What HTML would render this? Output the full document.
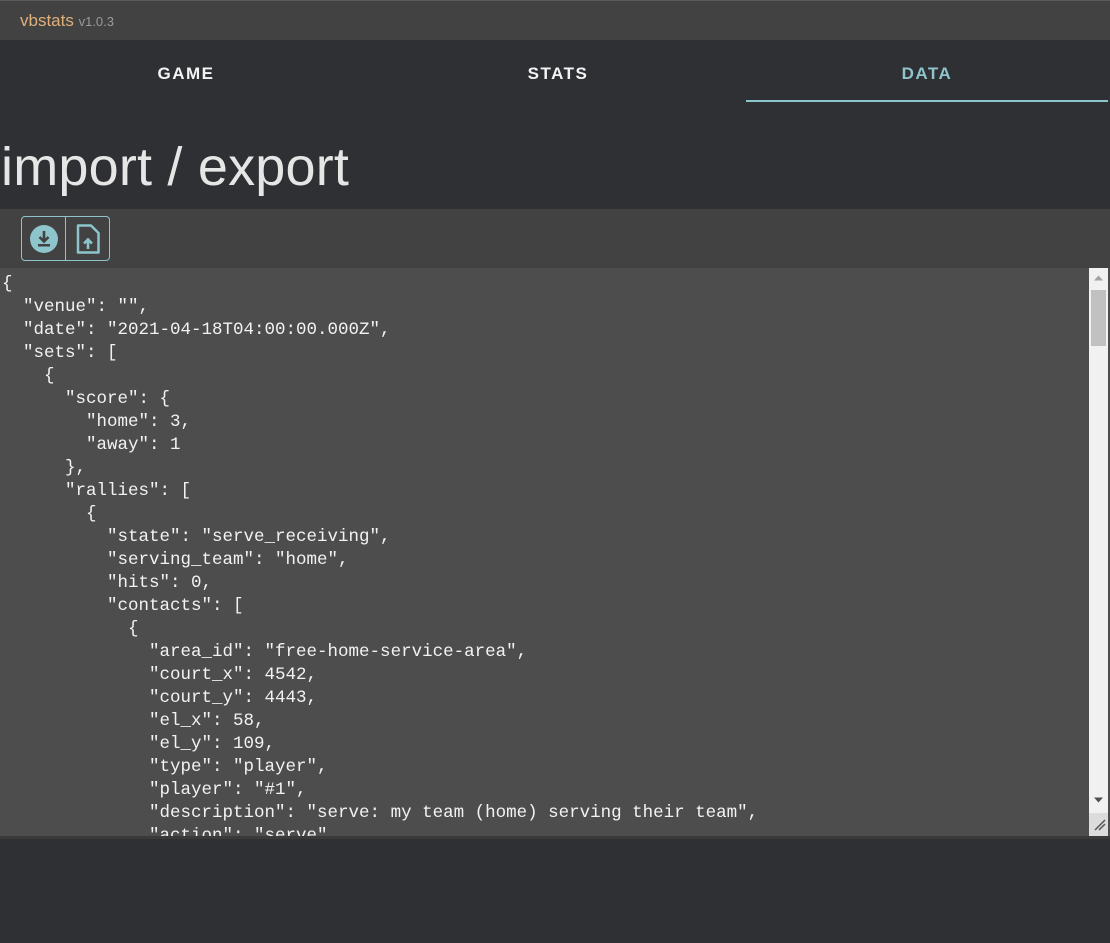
<!DOCTYPE html>
<html><head><meta charset="utf-8"><style>
*{margin:0;padding:0;box-sizing:border-box}
body{width:1110px;height:943px;background:#2f3034;font-family:"Liberation Sans",sans-serif;overflow:hidden;position:relative}
.top{position:absolute;left:0;top:0;width:1110px;height:40px;background:#424242;border-top:1px solid #5a5a5a}
.top .t{position:absolute;left:20px;top:10px;font-size:17px;color:#e0b07a}
.top .v{font-size:13px;color:#9a9a9a}
.tab{position:absolute;top:64px;font-size:17px;font-weight:bold;letter-spacing:1.5px;color:#f4f4f4;text-align:center;width:370px}
.ind{position:absolute;left:746px;top:100px;width:362px;height:2px;background:#8ec4cc}
h1{position:absolute;left:1px;top:136px;font-size:54px;font-weight:300;color:#e6e6e6;letter-spacing:0.2px;white-space:nowrap}
.tool{position:absolute;left:0;top:209px;width:1110px;height:59px;background:#424242}
.btns{position:absolute;left:21px;top:216px;width:89px;height:45px;border:1px solid #8ec4cc;border-radius:4px}
.btns .sep{position:absolute;left:43px;top:0;width:1px;height:43px;background:#8ec4cc}
.ta{position:absolute;left:0;top:268px;width:1110px;height:568px;background:#4d4d4d;overflow:hidden}
pre{position:absolute;left:2px;top:5px;font-family:"Liberation Mono",monospace;font-size:17.5px;line-height:23px;color:#f2f2f2}
.sb{position:absolute;left:1089px;top:0;width:19px;height:568px;background:#f1f1f1}
.thumb{position:absolute;left:2px;top:22px;width:15px;height:56px;background:#c1c1c1}
.bot{position:absolute;left:0;top:836px;width:1110px;height:3px;background:#3a3a3a}
</style></head><body>
<div class="top"><span class="t">vbstats <span class="v">v1.0.3</span></span></div>
<div class="tab" style="left:1px">GAME</div>
<div class="tab" style="left:373px">STATS</div>
<div class="tab" style="left:742px;color:#8ec4cc">DATA</div>
<div class="ind"></div>
<h1>import / export</h1>
<div class="tool"></div>
<div class="btns">
<svg style="position:absolute;left:7px;top:7px" width="30" height="30" viewBox="0 0 30 30"><circle cx="15" cy="15" r="14" fill="#8ec4cc"/><path d="M15 7v10M10.5 13l4.5 4.5 4.5-4.5" stroke="#424242" stroke-width="2.6" fill="none"/><rect x="9" y="20" width="12" height="2.5" fill="#424242"/></svg>
<div class="sep"></div>
<svg style="position:absolute;left:53px;top:7px" width="26" height="30" viewBox="0 0 26 30"><path d="M3 1.5h13l7.5 7.5v19.5H3z" fill="none" stroke="#8ec4cc" stroke-width="2.5" stroke-linejoin="round"/><path d="M13 25v-9M9 19.5l4-4 4 4" stroke="#8ec4cc" stroke-width="2.6" fill="none"/></svg>
</div>
<div class="ta"><pre>{
  "venue": "",
  "date": "2021-04-18T04:00:00.000Z",
  "sets": [
    {
      "score": {
        "home": 3,
        "away": 1
      },
      "rallies": [
        {
          "state": "serve_receiving",
          "serving_team": "home",
          "hits": 0,
          "contacts": [
            {
              "area_id": "free-home-service-area",
              "court_x": 4542,
              "court_y": 4443,
              "el_x": 58,
              "el_y": 109,
              "type": "player",
              "player": "#1",
              "description": "serve: my team (home) serving their team",
              "action": "serve",</pre>
<div class="sb"><svg style="position:absolute;left:4px;top:6px" width="11" height="8"><path d="M1 6.5L5.5 1.5 10 6.5z" fill="#a3a3a3"/></svg><div class="thumb"></div><svg style="position:absolute;left:4px;top:528px" width="11" height="8"><path d="M1 1.5L5.5 6.5 10 1.5z" fill="#505050"/></svg><div style="position:absolute;left:0;top:545px;width:19px;height:23px;background:#dcdcdc"></div><svg style="position:absolute;left:4px;top:550px" width="14" height="14"><path d="M2 12L12 2M6 12L12 6" stroke="#555" stroke-width="1.5"/></svg></div>
</div>
<div class="bot"></div>
</body></html>
